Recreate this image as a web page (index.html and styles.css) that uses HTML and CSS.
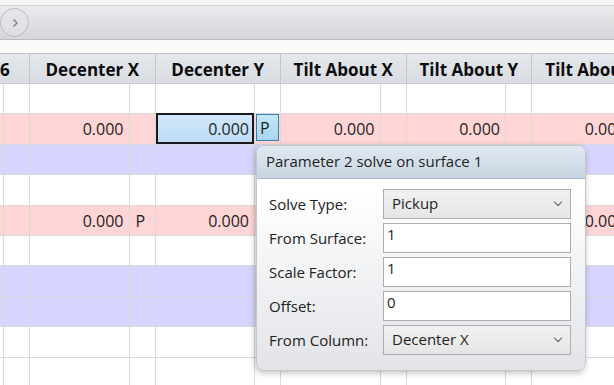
FILE: index.html
```html
<!DOCTYPE html>
<html lang="en">

<head>
    <meta charset="UTF-8">
    <title>Lens Data Editor - Solve</title>
    <link rel="stylesheet" href="styles.css">
</head>

<body>
    <div class="editor">
        <div class="topStrip"></div>
        <div class="toolbar">
            <div class="navButton">
                <svg width="12" height="12" viewBox="0 0 12 12">
                    <path d="M4.5 2.5 L8 6 L4.5 9.5" fill="none" stroke="#8a8a8a" stroke-width="1.6" />
                </svg>
            </div>
        </div>
        <div class="spacer"></div>

        <div class="sheet">
            <div class="headRow">
                <div class="hcell lead">6</div>
                <div class="hcell">Decenter X</div>
                <div class="hcell">Decenter Y</div>
                <div class="hcell">Tilt About X</div>
                <div class="hcell">Tilt About Y</div>
                <div class="hcell">Tilt About Z</div>
            </div>

            <div class="row">
                <div class="cell stub"></div><div class="cell solve"></div>
                <div class="cell value"></div><div class="cell solve"></div>
                <div class="cell value"></div><div class="cell solve"></div>
                <div class="cell value"></div><div class="cell solve"></div>
                <div class="cell value"></div><div class="cell solve"></div>
                <div class="cell value"></div><div class="cell solve"></div>
            </div>
            <div class="row pink">
                <div class="cell stub"></div><div class="cell solve"></div>
                <div class="cell value">0.000</div><div class="cell solve"></div>
                <div class="cell value selected">0.000</div><div class="cell solve"><span class="solveBtn">P</span></div>
                <div class="cell value">0.000</div><div class="cell solve"></div>
                <div class="cell value">0.000</div><div class="cell solve"></div>
                <div class="cell value">0.000</div><div class="cell solve"></div>
            </div>
            <div class="row blue">
                <div class="cell stub"></div><div class="cell solve"></div>
                <div class="cell value"></div><div class="cell solve"></div>
                <div class="cell value"></div><div class="cell solve"></div>
                <div class="cell value"></div><div class="cell solve"></div>
                <div class="cell value"></div><div class="cell solve"></div>
                <div class="cell value"></div><div class="cell solve"></div>
            </div>
            <div class="row">
                <div class="cell stub"></div><div class="cell solve"></div>
                <div class="cell value"></div><div class="cell solve"></div>
                <div class="cell value"></div><div class="cell solve"></div>
                <div class="cell value"></div><div class="cell solve"></div>
                <div class="cell value"></div><div class="cell solve"></div>
                <div class="cell value"></div><div class="cell solve"></div>
            </div>
            <div class="row pink">
                <div class="cell stub"></div><div class="cell solve"></div>
                <div class="cell value">0.000</div><div class="cell solve">P</div>
                <div class="cell value">0.000</div><div class="cell solve"></div>
                <div class="cell value"></div><div class="cell solve"></div>
                <div class="cell value"></div><div class="cell solve"></div>
                <div class="cell value">0.000</div><div class="cell solve"></div>
            </div>
            <div class="row">
                <div class="cell stub"></div><div class="cell solve"></div>
                <div class="cell value"></div><div class="cell solve"></div>
                <div class="cell value"></div><div class="cell solve"></div>
                <div class="cell value"></div><div class="cell solve"></div>
                <div class="cell value"></div><div class="cell solve"></div>
                <div class="cell value"></div><div class="cell solve"></div>
            </div>
            <div class="row blue">
                <div class="cell stub"></div><div class="cell solve"></div>
                <div class="cell value"></div><div class="cell solve"></div>
                <div class="cell value"></div><div class="cell solve"></div>
                <div class="cell value"></div><div class="cell solve"></div>
                <div class="cell value"></div><div class="cell solve"></div>
                <div class="cell value"></div><div class="cell solve"></div>
            </div>
            <div class="row blue">
                <div class="cell stub"></div><div class="cell solve"></div>
                <div class="cell value"></div><div class="cell solve"></div>
                <div class="cell value"></div><div class="cell solve"></div>
                <div class="cell value"></div><div class="cell solve"></div>
                <div class="cell value"></div><div class="cell solve"></div>
                <div class="cell value"></div><div class="cell solve"></div>
            </div>
            <div class="row">
                <div class="cell stub"></div><div class="cell solve"></div>
                <div class="cell value"></div><div class="cell solve"></div>
                <div class="cell value"></div><div class="cell solve"></div>
                <div class="cell value"></div><div class="cell solve"></div>
                <div class="cell value"></div><div class="cell solve"></div>
                <div class="cell value"></div><div class="cell solve"></div>
            </div>
            <div class="row">
                <div class="cell stub"></div><div class="cell solve"></div>
                <div class="cell value"></div><div class="cell solve"></div>
                <div class="cell value"></div><div class="cell solve"></div>
                <div class="cell value"></div><div class="cell solve"></div>
                <div class="cell value"></div><div class="cell solve"></div>
                <div class="cell value"></div><div class="cell solve"></div>
            </div>
        </div>

        <div class="solvePopup">
            <div class="popupTitle">Parameter 2 solve on surface 1</div>
            <div class="popupBody">
                <span class="fieldLabel">Solve Type:</span>
                <div class="combo">Pickup<span class="chevron"></span></div>

                <span class="fieldLabel">From Surface:</span>
                <div class="textBox">1</div>

                <span class="fieldLabel">Scale Factor:</span>
                <div class="textBox">1</div>

                <span class="fieldLabel">Offset:</span>
                <div class="textBox">0</div>

                <span class="fieldLabel">From Column:</span>
                <div class="combo">Decenter X<span class="chevron"></span></div>
            </div>
        </div>
    </div>
</body>

</html>
```

FILE: styles.css
```css
/* Lens data editor with the solve popup open */

html,
body {
    margin: 0;
    padding: 0;
    background: #ffffff;
    overflow: hidden;
}

.editor {
    position: relative;
    width: 614px;
    height: 385px;
    overflow: hidden;
    font-family: "Open Sans", "Noto Sans", sans-serif;
    font-size: 16px;
    color: #1e1e1e;
}

.topStrip {
    height: 5px;
    background: #f4f4f4;
}

.toolbar {
    height: 35px;
    box-sizing: border-box;
    border-top: 1px solid #d0d2d5;
    border-bottom: 1px solid #b9bcc0;
    background: linear-gradient(#e9eaec, #d4d6d9);
    display: flex;
    align-items: center;
}

.navButton {
    width: 29px;
    height: 29px;
    box-sizing: border-box;
    border: 1px solid #b9bbbe;
    border-radius: 50%;
    background: linear-gradient(#e6e7e9, #dcdee1);
    display: flex;
    align-items: center;
    justify-content: center;
}

.spacer {
    height: 13px;
    background: #fafafa;
}

/* grid */

.sheet {
    width: 700px;
}

.headRow {
    display: flex;
    height: 31px;
    box-sizing: border-box;
    border-top: 1px solid #c2c6cb;
    border-bottom: 1px solid #c9ccd0;
    background: linear-gradient(#e4e7eb, #d9dde2);
}

.hcell {
    flex: none;
    width: 125.5px;
    box-sizing: border-box;
    border-right: 1px solid #c2c6cb;
    padding-top: 2px;
    font-weight: bold;
    font-size: 17px;
    line-height: 27px;
    text-align: center;
    color: #0c0c0c;
    white-space: nowrap;
}

.hcell.lead {
    width: 30px;
    text-align: left;
}

.row {
    display: flex;
    height: 30.4px;
    box-sizing: border-box;
    border-bottom: 1px solid #dadada;
}

.row.pink {
    background: #ffd5d6;
}

.row.blue {
    background: #d5d5ff;
}

.cell {
    flex: none;
    box-sizing: border-box;
    border-right: 1px solid #d9d9d9;
    line-height: 31px;
    white-space: nowrap;
}

.cell.stub {
    width: 4px;
}

.cell.solve {
    width: 26px;
    padding-left: 6px;
}

.cell.value {
    width: 99.5px;
    text-align: right;
    padding-right: 5px;
}

.cell.selected {
    background: linear-gradient(#d2e7fb, #bddcf6);
    box-shadow: inset 0 0 0 2px #1a1a1a;
    margin-top: -1px;
    height: calc(100% + 1px);
    line-height: 32px;
}

.cell .solveBtn {
    display: block;
    margin: 0 1px 0 -5px;
    height: 27px;
    line-height: 27px;
    padding-left: 3px;
    box-sizing: border-box;
    border: 1px solid #3c7fa6;
    background: linear-gradient(#c4e5f6, #a9d6ee);
}

/* solve popup */

.solvePopup {
    position: absolute;
    left: 256px;
    top: 145px;
    width: 330px;
    height: 226px;
    box-sizing: border-box;
    border: 1px solid #c3c7cc;
    border-radius: 8px;
    background: linear-gradient(#ffffff 20%, #e2e4e8);
    box-shadow: -1px 2px 6px rgba(0, 0, 0, 0.25);
    overflow: hidden;
}

.popupTitle {
    height: 33px;
    box-sizing: border-box;
    padding-left: 9px;
    line-height: 31px;
    font-size: 15px;
    color: #1e1e1e;
    border-bottom: 1px solid #a9bccd;
    background: linear-gradient(#e1e9f1, #c7d5e2);
}

.popupBody {
    display: grid;
    grid-template-columns: 114px 188px;
    grid-auto-rows: 30px;
    row-gap: 4px;
    align-items: center;
    padding: 10px 0 0 12px;
}

.fieldLabel {
    font-size: 15px;
    line-height: 20px;
    color: #222;
}

.combo,
.textBox {
    height: 30px;
    box-sizing: border-box;
    font-size: 15px;
    color: #1e1e1e;
}

.combo {
    position: relative;
    border: 1px solid #adadad;
    background: linear-gradient(#f1f1f1, #e5e5e5);
    padding-left: 8px;
    line-height: 27px;
}

.textBox {
    border: 1px solid #abadb3;
    background: #ffffff;
    padding-left: 3px;
    line-height: 21px;
}

.chevron {
    position: absolute;
    right: 9px;
    top: 9px;
    width: 5px;
    height: 5px;
    border-right: 1.5px solid #5a5a5a;
    border-bottom: 1.5px solid #5a5a5a;
    transform: rotate(45deg);
}
```
